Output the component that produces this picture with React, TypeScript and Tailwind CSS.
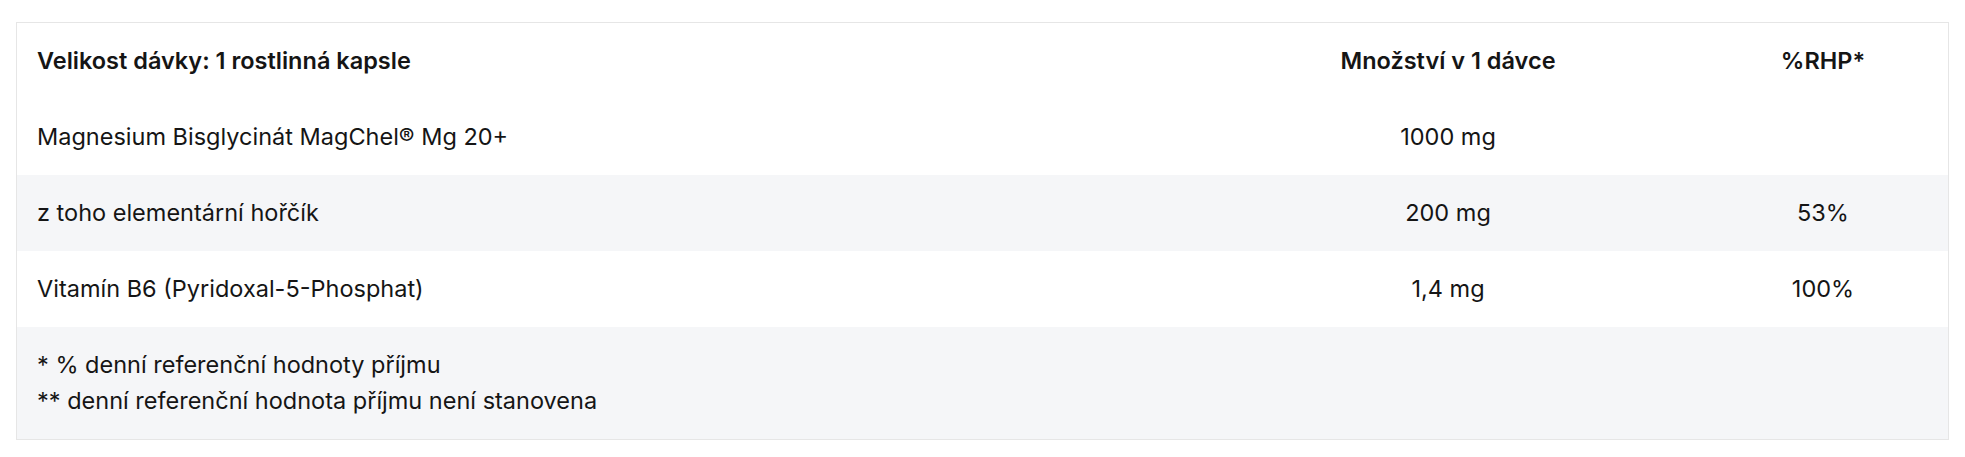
// Nutrition facts table — supplement label (velikost dávky, množství, %RHP).

const ROWS = [
  { name: 'Magnesium Bisglycinát MagChel® Mg 20+', amount: '1000 mg', rhp: '' },
  { name: 'z toho elementární hořčík', amount: '200 mg', rhp: '53%' },
  { name: 'Vitamín B6 (Pyridoxal-5-Phosphat)', amount: '1,4 mg', rhp: '100%' },
];

const COLS = 'grid grid-cols-[1fr_500px_250px] items-center';

export default function App() {
  return (
    <div className="min-h-screen bg-white pt-[22px] font-['Inter','Noto_Sans',sans-serif] text-[23.5px] text-[#151515]">
      <div className="mx-4 border border-[#e6e6e6]">
        <div className={`${COLS} py-6 font-semibold leading-7`}>
          <div className="pl-5">Velikost dávky: 1 rostlinná kapsle</div>
          <div className="text-center">Množství v 1 dávce</div>
          <div className="text-center">%RHP*</div>
        </div>
        {ROWS.map((row, i) => (
          <div
            key={row.name}
            className={`${COLS} py-6 leading-7 ${i % 2 === 1 ? 'bg-[#f5f6f8]' : 'bg-white'}`}
          >
            <div className="pl-5">{row.name}</div>
            <div className="text-center">{row.amount}</div>
            <div className="text-center">{row.rhp}</div>
          </div>
        ))}
        <div className="bg-[#f5f6f8] py-5 pl-5 leading-9">
          <p>* % denní referenční hodnoty příjmu</p>
          <p>** denní referenční hodnota příjmu není stanovena</p>
        </div>
      </div>
    </div>
  );
}
